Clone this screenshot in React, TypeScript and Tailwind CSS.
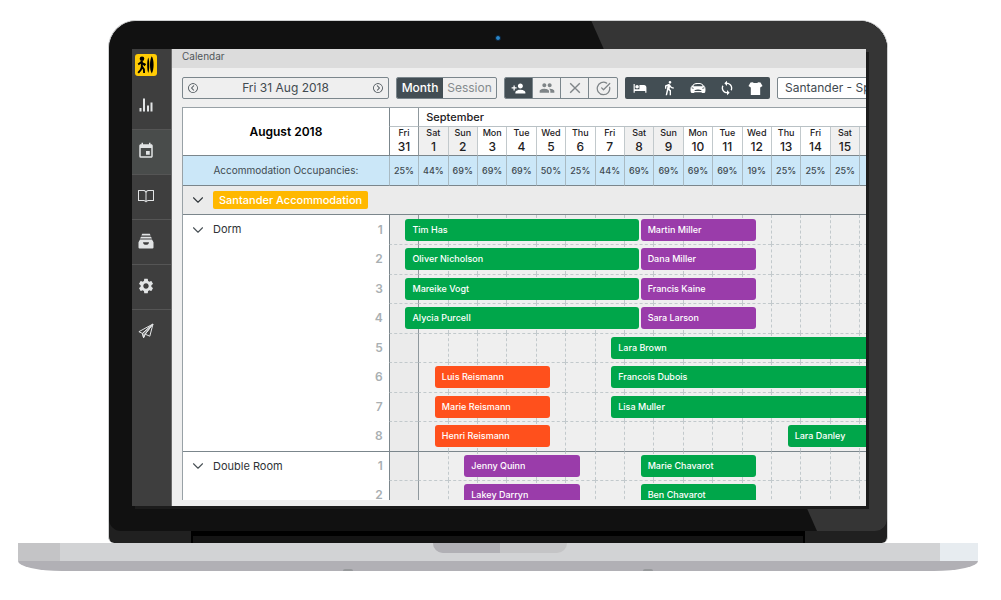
import { clsx } from "clsx";
import { ChevronDown, CircleCheckBig } from "lucide-react";
import { GoBook } from "react-icons/go";
import { IoIosArrowDropleft, IoIosArrowDropright } from "react-icons/io";
import { IoCarSport } from "react-icons/io5";
import { MdDirectionsWalk, MdEvent, MdHotel, MdPeople, MdPersonAdd, MdSettings, MdSync } from "react-icons/md";

type Color = "green" | "purple" | "orange";

interface Booking {
  guest: string;
  color: Color;
  // grid lines in half days, 1 is the left edge of Fri 31
  from: number;
  to: number;
}

interface Room {
  name: string;
  beds: Booking[][];
}

const days = [
  { day: "Fri", date: 31, occupancy: 25 },
  { day: "Sat", date: 1, occupancy: 44 },
  { day: "Sun", date: 2, occupancy: 69 },
  { day: "Mon", date: 3, occupancy: 69 },
  { day: "Tue", date: 4, occupancy: 69 },
  { day: "Wed", date: 5, occupancy: 50 },
  { day: "Thu", date: 6, occupancy: 25 },
  { day: "Fri", date: 7, occupancy: 44 },
  { day: "Sat", date: 8, occupancy: 69 },
  { day: "Sun", date: 9, occupancy: 69 },
  { day: "Mon", date: 10, occupancy: 69 },
  { day: "Tue", date: 11, occupancy: 69 },
  { day: "Wed", date: 12, occupancy: 19 },
  { day: "Thu", date: 13, occupancy: 25 },
  { day: "Fri", date: 14, occupancy: 25 },
  { day: "Sat", date: 15, occupancy: 25 },
];

// one unlabelled column runs off the right edge
const COLUMN_COUNT = days.length + 1;

const rooms: Room[] = [
  {
    name: "Dorm",
    beds: [
      [
        { guest: "Tim Has", color: "green", from: 2, to: 18 },
        { guest: "Martin Miller", color: "purple", from: 18, to: 26 },
      ],
      [
        { guest: "Oliver Nicholson", color: "green", from: 2, to: 18 },
        { guest: "Dana Miller", color: "purple", from: 18, to: 26 },
      ],
      [
        { guest: "Mareike Vogt", color: "green", from: 2, to: 18 },
        { guest: "Francis Kaine", color: "purple", from: 18, to: 26 },
      ],
      [
        { guest: "Alycia Purcell", color: "green", from: 2, to: 18 },
        { guest: "Sara Larson", color: "purple", from: 18, to: 26 },
      ],
      [{ guest: "Lara Brown", color: "green", from: 16, to: 35 }],
      [
        { guest: "Luis Reismann", color: "orange", from: 4, to: 12 },
        { guest: "Francois Dubois", color: "green", from: 16, to: 35 },
      ],
      [
        { guest: "Marie Reismann", color: "orange", from: 4, to: 12 },
        { guest: "Lisa Muller", color: "green", from: 16, to: 35 },
      ],
      [
        { guest: "Henri Reismann", color: "orange", from: 4, to: 12 },
        { guest: "Lara Danley", color: "green", from: 28, to: 35 },
      ],
    ],
  },
  {
    name: "Double Room",
    beds: [
      [
        { guest: "Jenny Quinn", color: "purple", from: 6, to: 14 },
        { guest: "Marie Chavarot", color: "green", from: 18, to: 26 },
      ],
      [
        { guest: "Lakey Darryn", color: "purple", from: 6, to: 14 },
        { guest: "Ben Chavarot", color: "green", from: 18, to: 26 },
      ],
    ],
  },
];

const barColors: Record<Color, string> = {
  green: "bg-[#00a64a]",
  purple: "bg-[#9a3caa]",
  orange: "bg-[#ff501c]",
};

const columns = "grid grid-cols-[minmax(0,7fr)_repeat(17,minmax(0,1fr))]";

function Logo() {
  return (
    <svg viewBox="0 0 22 22" className="h-[22px] w-[22px] rounded-[3px] bg-[#ffcb05]" aria-hidden="true">
      <circle cx="7" cy="4.8" r="2.3" />
      <path
        d="M6.800 7v6M6.400 8l-3.200 2.400M7 8.600l2.400 2.200 1-1.200M7 12.600l-1.200 3.200-2.600 3M7 12.600l1.900 2.800.2 3.600"
        stroke="black"
        strokeWidth="1.900"
        fill="none"
      />
      <path d="M13.300 3.500c-1.500 3-1.500 12.500 0 15.500 1.300-3 1.300-12.500 0-15.500z" />
      <path d="M16.800 2.300c-2.400 3.500-2.400 13.500 0 17.200 2.400-3.700 2.400-13.700 0-17.200z" />
    </svg>
  );
}

function ChartIcon() {
  return (
    <svg viewBox="0 0 16 16" fill="currentColor" className="h-4 w-4">
      <path d="M1.500 11h2v3.500h-2zM5 1.500h2v13H5zM9 8.500h2v6H9zM12.500 5.500h2v9h-2z" />
    </svg>
  );
}

function TrayIcon() {
  return (
    <svg viewBox="0 0 16 16" fill="currentColor" className="h-4 w-4">
      <path d="M4.200.8h7.600l.8 1.800H3.400zM3 3.700h10l.9 1.900H2.100z" />
      <path
        fillRule="evenodd"
        d="M2 6.600h12l1.500 2.600v5.200q0 1.100-1.100 1.100H1.600q-1.100 0-1.100-1.100V9.200zM5 9.200c.2 1.800 1.300 2.600 3 2.600s2.800-.8 3-2.600z"
      />
    </svg>
  );
}

function PlaneIcon() {
  return (
    <svg viewBox="0 0 16 16" fill="none" stroke="currentColor" strokeWidth="1" strokeLinejoin="round" className="h-4 w-4">
      <path d="M15 1L.9 8.700l3.500 1.700L15 1 7.200 11.200l4.600 2L15 1zM4.400 10.400l1.200 4.300 1.600-3.500" />
      <path d="M4.400 10.400L15 1 7.200 11.200l-1.600 3.500z" fill="currentColor" fillOpacity="0.4" />
    </svg>
  );
}

function ShirtIcon() {
  return (
    <svg viewBox="0 0 16 16" fill="currentColor" className="h-[15px] w-[15px]">
      <path d="M5 1.200c.8 1.200 5.200 1.200 6 0l2.300.3L15.500 5.300l-2.500 1.500V14.800H3V6.800L.5 5.300 2.700 1.500z" />
    </svg>
  );
}

function CloseIcon() {
  return (
    <svg viewBox="0 0 16 16" stroke="currentColor" strokeWidth="1.400" className="h-4 w-4">
      <path d="M3.200 3.200l9.600 9.600M12.800 3.200l-9.600 9.600" />
    </svg>
  );
}

const navItems = [
  { label: "Reports", icon: <ChartIcon /> },
  { label: "Calendar", icon: <MdEvent className="h-[18px] w-[18px]" />, active: true },
  { label: "Guide", icon: <GoBook className="h-4 w-4" /> },
  { label: "Inbox", icon: <TrayIcon /> },
  { label: "Settings", icon: <MdSettings className="h-[18px] w-[18px]" /> },
  { label: "Messages", icon: <PlaneIcon /> },
];

function Sidebar() {
  return (
    <nav className="w-10 shrink-0 border-r border-[#6a6a6a] bg-[#3e3e3e] pt-[5px] text-[#e2e4e5]">
      <a href="#home" aria-label="Home" className="block px-[3px] pb-2">
        <Logo />
      </a>
      {navItems.map((item, i) => (
        <a
          key={item.label}
          href={`#${item.label.toLowerCase()}`}
          aria-label={item.label}
          className={clsx(
            "flex h-[45px] items-center justify-center pr-3 pb-[3px]",
            i > 0 && "border-t border-[#555]",
            item.active && "bg-[#494c4b]"
          )}
        >
          {item.icon}
        </a>
      ))}
    </nav>
  );
}

function Toolbar() {
  return (
    <div className="flex gap-[7px] pt-[9px] pb-2 text-xs text-[#414a50] *:h-[22px] *:shrink-0">
      <div className="flex w-[207px] items-center justify-between rounded-xs border border-[#7b868c] px-1">
        <button type="button" aria-label="Previous day">
          <IoIosArrowDropleft className="h-3 w-3" />
        </button>
        <span>Fri 31 Aug 2018</span>
        <button type="button" aria-label="Next day">
          <IoIosArrowDropright className="h-3 w-3" />
        </button>
      </div>

      <div className="flex overflow-hidden rounded-xs border border-[#7b868c]">
        <button type="button" className="w-[46px] bg-[#434e54] font-medium text-white">
          Month
        </button>
        <button type="button" className="w-[53px] text-[#858b8e]">
          Session
        </button>
      </div>

      <div className="flex divide-x divide-[#7b868c] overflow-hidden rounded-xs border border-[#7b868c] text-[#7f8588] *:flex *:w-7 *:items-center *:justify-center">
        <button type="button" aria-label="Add guest" className="bg-[#434e54] text-white">
          <MdPersonAdd className="h-[15px] w-[15px]" />
        </button>
        <button type="button" aria-label="Add group">
          <MdPeople className="h-4 w-4" />
        </button>
        <button type="button" aria-label="Cancel">
          <CloseIcon />
        </button>
        <button type="button" aria-label="Confirm">
          <CircleCheckBig className="h-[15px] w-[15px]" />
        </button>
      </div>

      <div className="flex rounded-xs bg-[#434e54] text-white *:flex *:w-[29px] *:items-center *:justify-center">
        <button type="button" aria-label="Accommodation">
          <MdHotel className="h-[14px] w-[14px]" />
        </button>
        <button type="button" aria-label="Activities">
          <MdDirectionsWalk className="h-4 w-4" />
        </button>
        <button type="button" aria-label="Transfers">
          <IoCarSport className="h-4 w-4" />
        </button>
        <button type="button" aria-label="Refresh">
          <MdSync className="h-4 w-4" />
        </button>
        <button type="button" aria-label="Equipment">
          <ShirtIcon />
        </button>
      </div>

      <select
        aria-label="Location"
        className="w-40 appearance-none rounded-xs border border-[#7b868c] bg-white px-[7px]"
      >
        <option>Santander - Spain</option>
      </select>
    </div>
  );
}

function BedRow({ room, bed, index, first }: { room: string; bed: Booking[]; index: number; first: boolean }) {
  return (
    <tr className={clsx(columns, "odd:h-[29px] even:h-[30px]")}>
      <th
        className={clsx(
          "flex items-center bg-white px-[6px] text-xs",
          index === 0 && !first && "border-t border-[#7b868c]"
        )}
      >
        {index === 0 && (
          <>
            <ChevronDown className="mr-[6px] h-[18px] w-[18px] text-[#4a5257]" strokeWidth={1.5} />
            <span className="text-[11px] font-normal text-[#2f3336]">{room}</span>
          </>
        )}
        <span className="ml-auto font-semibold text-[#a9afb2]">{index + 1}</span>
      </th>
      <td className="col-span-17 grid grid-cols-[repeat(34,minmax(0,1fr))] grid-rows-1">
        {Array.from({ length: COLUMN_COUNT }, (_, i) => (
          <div
            key={i}
            className={clsx(
              "row-start-1 border-l",
              index === 0 ? !first && "border-t border-t-[#7b868c]" : "border-t border-t-[#c2c9cc] [border-top-style:dashed]",
              i === 0 && "border-l-[#7b868c] bg-[#ebebeb]",
              i === 1 && "border-l-[#8f989d]",
              i > 1 && "border-l-[#c2c9cc] [border-left-style:dashed]"
            )}
            style={{ gridColumn: `${i * 2 + 1} / span 2` }}
          />
        ))}
        {bed.map((booking) => (
          <div
            key={booking.guest}
            className={clsx(
              "row-start-1 mt-1 ml-[2px] h-[22px] truncate rounded-[3px] px-[7px] text-[9px] leading-[22px] font-medium text-white",
              barColors[booking.color]
            )}
            style={{ gridColumn: `${booking.from} / ${booking.to}` }}
          >
            {booking.guest}
          </div>
        ))}
      </td>
    </tr>
  );
}

function Planner() {
  return (
    <div className="max-h-[393px] overflow-hidden border-t border-l border-[#98a1a6]">
      <table className="block w-[103.3%] text-[#1d2022]">
        <thead className={columns}>
          <tr className="contents">
            <th className="row-span-2 flex items-center justify-center border-b border-[#7b868c] bg-white text-xs font-semibold text-black">
              August 2018
            </th>
            <th className="h-[19px] border-b border-l border-[#b9c1c5] border-l-[#7b868c] bg-white" />
            <th className="col-span-16 h-[19px] border-b border-l border-[#b9c1c5] border-l-[#8f989d] bg-white pl-[7px] text-left text-[11px] leading-[18px] font-medium">
              September
            </th>
          </tr>
          <tr className="contents">
            {days.map(({ day, date }, i) => (
              <th
                key={date}
                className={clsx(
                  "flex h-[29px] flex-col items-center border-b border-l border-[#c2c9cc] border-b-[#7b868c]",
                  i === 0 && "border-l-[#7b868c]",
                  i === 1 && "border-l-[#8f989d]",
                  day.startsWith("S") ? "bg-[#f0f0f0]" : "bg-white"
                )}
              >
                <span className="text-[9px] leading-3 font-medium">{day}</span>
                <span className="text-xs leading-[15px] font-medium">{date}</span>
              </th>
            ))}
            <th className="h-[29px] border-b border-l border-[#c2c9cc] border-b-[#7b868c] bg-[#f0f0f0]" />
          </tr>
        </thead>
        <tbody className="block">
          <tr className={clsx(columns, "h-[30px] bg-[#cbe7f8] text-[#3f4a50]")}>
            <th className="border-b border-[#7b868c] text-[10px] leading-[29px] font-normal">
              Accommodation Occupancies:
            </th>
            {days.map(({ date, occupancy }) => (
              <td
                key={date}
                className="border-b border-l border-b-[#7b868c] border-l-[#a9bac3] text-center text-[9px] leading-[29px] font-medium"
              >
                {occupancy}%
              </td>
            ))}
            <td className="border-b border-l border-b-[#7b868c] border-l-[#a9bac3]" />
          </tr>
          <tr className="flex h-[29px] border-b border-[#7b868c] bg-[#ebebeb]">
            <th className="flex items-center px-[6px]">
              <ChevronDown className="mr-[6px] h-[18px] w-[18px] text-[#33393d]" strokeWidth={1.5} />
              <span className="rounded-xs bg-[#ffb800] px-[6px] text-[11px] leading-[18px] font-medium text-white">
                Santander Accommodation
              </span>
            </th>
          </tr>
        </tbody>
        {rooms.map((room, r) => (
          <tbody key={room.name} className="block">
            {room.beds.map((bed, i) => (
              <BedRow key={i} room={room.name} bed={bed} index={i} first={r === 0} />
            ))}
          </tbody>
        ))}
      </table>
    </div>
  );
}

function Laptop({ children }: { children: React.ReactNode }) {
  return (
    <div className="mx-auto max-w-[960px]">
      {/* Lid */}
      <div className="mx-auto max-w-[780px] overflow-hidden rounded-t-[28px] rounded-b-[6px] border border-b-0 border-[#d0d1d2] bg-[#202020]">
        <div className="relative overflow-hidden rounded-t-[27px] rounded-b-[12px] bg-[#111] pt-7 pr-[21px] pb-[25px] pl-[23px]">
          <div className="absolute inset-0 bg-[#353535] [clip-path:polygon(62%_0,100%_0,100%_100%,91%_100%)]" />
          <span className="absolute top-[14px] left-1/2 h-[6px] w-[6px] -translate-x-1/2 rounded-full border border-[#0b2036] bg-[#2a86c8]" />
          <div className="relative shadow-[3px_3px_0_#1c1c1c]">{children}</div>
        </div>
        {/* Hinge */}
        <div className="h-3 px-[82px]">
          <div className="h-3 border-x-2 border-t-[5px] border-black bg-[#141414]" />
        </div>
      </div>
      {/* Base */}
      <div className="flex h-[18px] justify-between bg-[#d2d3d5]">
        <div className="w-[42px] bg-[#c4c4c6]" />
        <div className="flex h-[10px] w-[134px] overflow-hidden rounded-b-[10px] bg-[#c4c4c6]">
          <div className="w-1/2 bg-[#b1b0b5]" />
        </div>
        <div className="w-[38px] bg-[#e7ecf0]" />
      </div>
      <div className="flex h-[10px] items-end justify-around bg-[#b1b0b5] px-[180px] [border-bottom-left-radius:44px_10px] [border-bottom-right-radius:44px_10px]">
        <span className="h-[2px] w-[10px] rounded-t-full bg-[#97999b]" />
        <span className="h-[2px] w-[10px] rounded-t-full bg-[#97999b]" />
      </div>
    </div>
  );
}

export default function App() {
  return (
    <div className="min-h-screen bg-white pt-5 pr-[5px] font-['Inter',sans-serif]">
      <Laptop>
        <div className="flex overflow-hidden bg-[#efefef]">
          <Sidebar />
          <main className="min-w-0 flex-1 pb-[6px]">
            <h1 className="h-[19px] bg-[#dcdcdc] pl-[10px] text-[10px] leading-[15px] text-[#50565a]">Calendar</h1>
            <div className="overflow-hidden pl-[10px]">
              <Toolbar />
              <Planner />
            </div>
          </main>
        </div>
      </Laptop>
    </div>
  );
}
